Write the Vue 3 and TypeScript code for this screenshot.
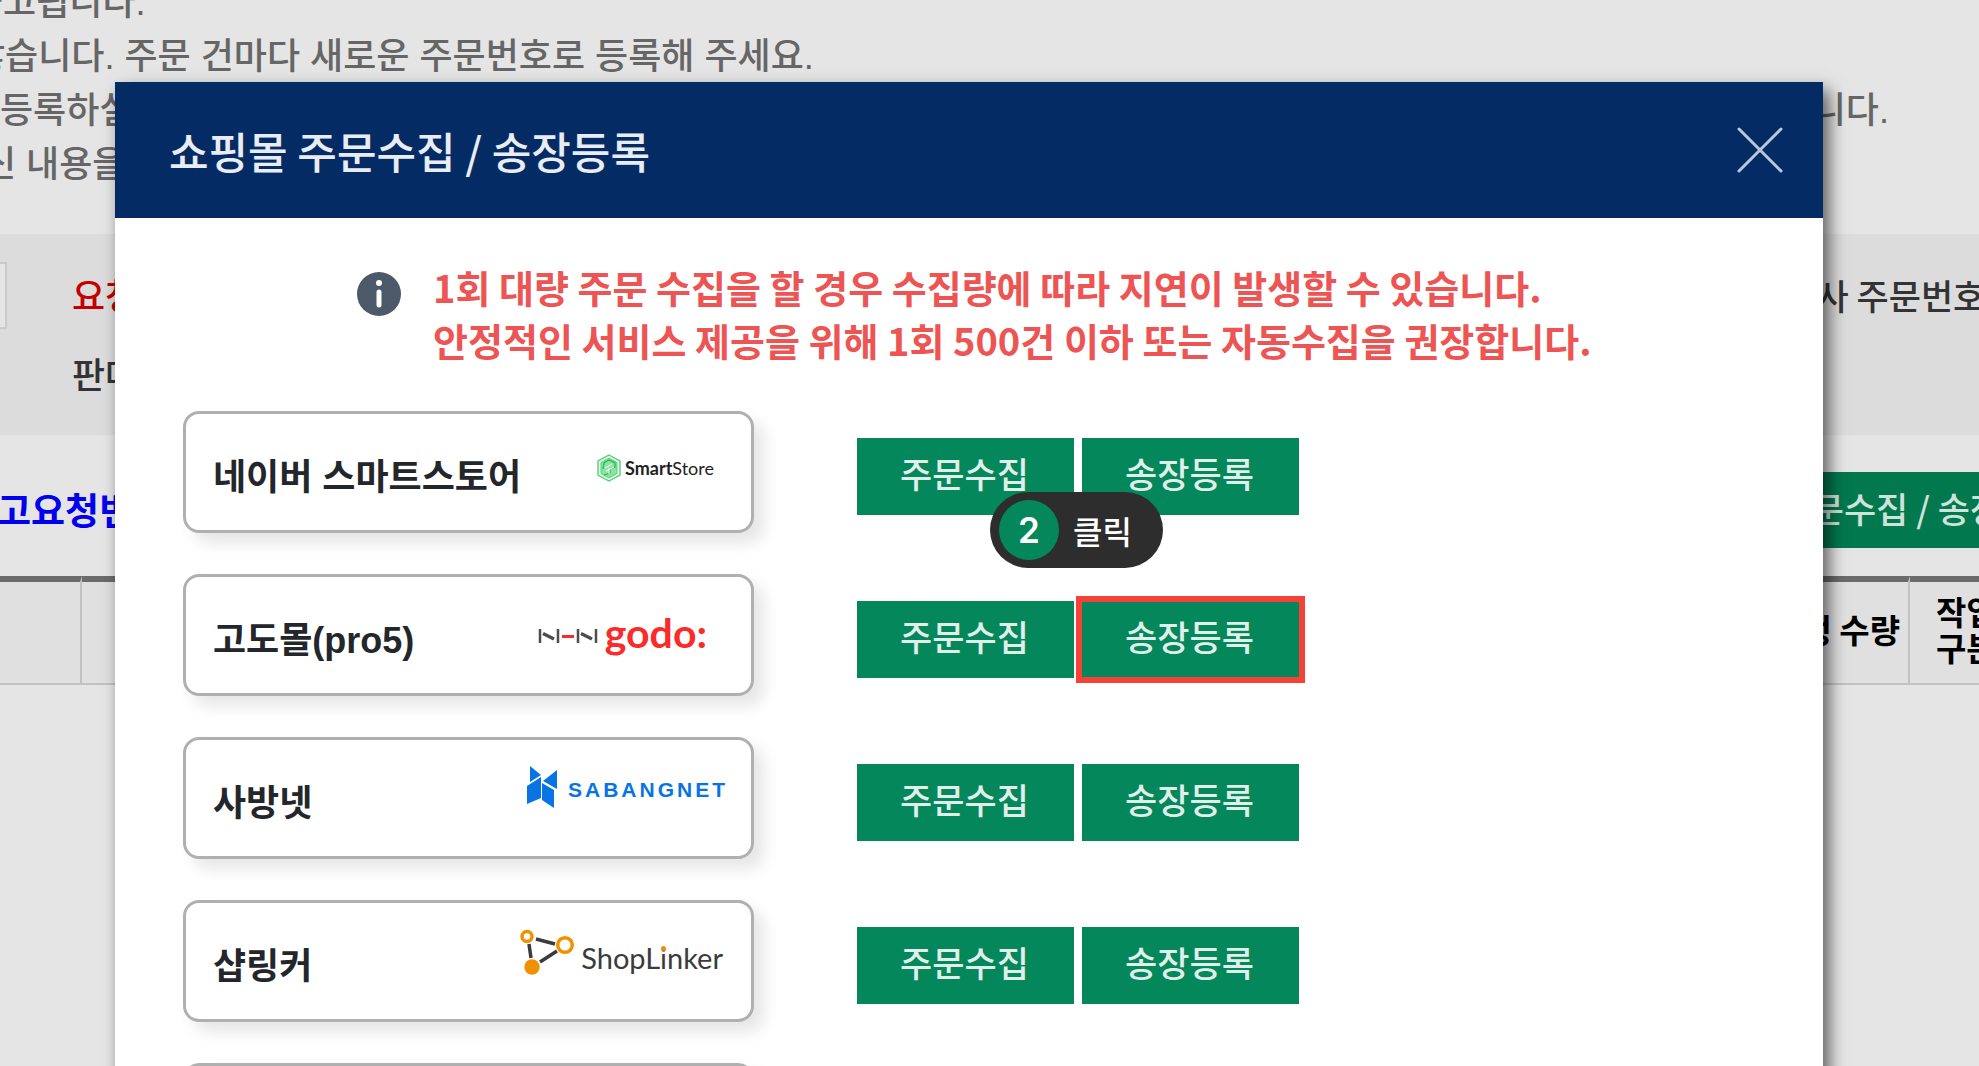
<script setup lang="ts">
interface NoticeLine {
  text: string
  tail?: string
  indent: number
}

interface Mall {
  id: string
  name: string
  highlighted?: boolean
}

const notices: NoticeLine[] = [
  { text: '출고됩니다.', indent: -30 },
  { text: '않습니다. 주문 건마다 새로운 주문번호로 등록해 주세요.', indent: -28 },
  { text: '등록하실', tail: '니다.', indent: 0 },
  { text: '신 내용을', indent: -17 },
]

const malls: Mall[] = [
  { id: 'smartstore', name: '네이버 스마트스토어' },
  { id: 'godo', name: '고도몰(pro5)', highlighted: true },
  { id: 'sabangnet', name: '사방넷' },
  { id: 'shoplinker', name: '샵링커' },
  { id: 'next', name: '' },
]
</script>

<template>
  <div class="page">
    <main class="backdrop">
      <section class="notices">
        <p v-for="line in notices" :key="line.text" :style="{ marginLeft: line.indent + 'px' }">
          <span>{{ line.text }}</span>
          <span v-if="line.tail">{{ line.tail }}</span>
        </p>
      </section>

      <section class="filters">
        <input class="filter-input" type="text" aria-label="검색어" />
        <div class="filter-labels">
          <span class="required">요청일</span>
          <span>판매처</span>
        </div>
        <div class="filter-labels right">
          <span>판매사 주문번호</span>
        </div>
      </section>

      <section class="toolbar">
        <strong>출고요청번호</strong>
        <button type="button" class="toolbar-button">쇼핑몰 주문수집 / 송장등록</button>
      </section>

      <table class="orders">
        <thead>
          <tr>
            <th class="col-check"></th>
            <th></th>
            <th class="col-qty">예정 수량</th>
            <th class="col-kind">작업<br />구분</th>
          </tr>
        </thead>
      </table>
    </main>

    <div class="modal" role="dialog" aria-labelledby="modal-title">
      <header class="modal-header">
        <h1 id="modal-title">쇼핑몰 주문수집 / 송장등록</h1>
        <button type="button" class="close" aria-label="닫기">
          <svg viewBox="0 0 46 46" width="46" height="46">
            <path d="M2 2 44 44M44 2 2 44" stroke="#bcc8da" stroke-width="3" stroke-linecap="round" />
          </svg>
        </button>
      </header>

      <div class="alert">
        <svg viewBox="0 0 44 44" width="44" height="44" aria-hidden="true">
          <circle cx="22" cy="22" r="22" fill="#4b5968" />
          <circle cx="22" cy="11" r="3" fill="#fff" />
          <path d="M22 20V33" stroke="#fff" stroke-width="5" stroke-linecap="round" />
        </svg>
        <p>
          1회 대량 주문 수집을 할 경우 수집량에 따라 지연이 발생할 수 있습니다.<br />
          안정적인 서비스 제공을 위해 1회 500건 이하 또는 자동수집을 권장합니다.
        </p>
      </div>

      <ul class="malls">
        <li v-for="mall in malls" :key="mall.id">
          <div class="card">
            <span class="mall-name">{{ mall.name }}</span>

            <span v-if="mall.id === 'smartstore'" class="logo smartstore">
              <svg viewBox="0 0 24 28" width="24" height="28" aria-hidden="true">
                <path d="M12 1 23 7V21L12 27 1 21V7Z" fill="#effcf2" stroke="#4fd273" stroke-width="1.4" />
                <path d="M12 4 20 8.500V19.500L12 24 4 19.500V8.500Z" fill="#8be5a2" stroke="#4fd273" />
                <path d="M6 15 7 9 12 6 18 9V13L13 15V19L7 21" fill="none" stroke="#2fb556" stroke-width="1.300" />
                <path d="M8 14 15 10M9 17 17 13M12 14V20" fill="none" stroke="#fff" />
              </svg>
              <span><b>Smart</b>Store</span>
            </span>

            <span v-else-if="mall.id === 'godo'" class="logo godo">
              <svg viewBox="0 0 60 16" width="60" height="16" aria-hidden="true">
                <g fill="none" stroke="#4d4d4d" stroke-width="2.500">
                  <path d="M2 1V15M20 1V15M40 1V15M58 1V15" />
                  <path d="M5 5.500 16 11M43 5.500 54 11" stroke-width="3.500" />
                </g>
                <path d="M24 8.500H36" stroke="#fa2b2b" stroke-width="3" />
              </svg>
              <span>godo:</span>
            </span>

            <span v-else-if="mall.id === 'sabangnet'" class="logo sabangnet">
              <svg viewBox="0 0 31 42" width="31" height="42" aria-hidden="true">
                <g fill="#0874e4">
                  <path d="M3 0 14 9 3 16Z" />
                  <path d="M30 4V23L16 15Z" />
                  <path d="M0 20 14 11V32L0 38Z" />
                  <path d="M15 17 27 24V42L15 34Z" />
                </g>
              </svg>
              <span>SABANGNET</span>
            </span>

            <span v-else-if="mall.id === 'shoplinker'" class="logo shoplinker">
              <svg viewBox="0 0 56 46" width="56" height="46" aria-hidden="true">
                <path d="M16 10 35 15M9 15 11 29M20 33 37 22" stroke="#3b3b3d" stroke-width="3.500" fill="none" />
                <circle cx="7" cy="7.500" r="5" fill="#fff" stroke="#f29100" stroke-width="3.500" />
                <circle cx="45" cy="16" r="7.300" fill="#fff" stroke="#f29100" stroke-width="3.500" />
                <circle cx="12" cy="38" r="7.700" fill="#f29100" />
              </svg>
              <span>ShopL<span class="dotted">i</span>nker</span>
            </span>
          </div>

          <div class="actions">
            <button type="button">주문수집</button>
            <button type="button" :class="{ highlighted: mall.highlighted }">송장등록</button>
            <div v-if="mall.highlighted" class="step">
              <span class="step-number">2</span>
              <span>클릭</span>
            </div>
          </div>
        </li>
      </ul>
    </div>
  </div>
</template>

<style>
body {
  margin: 0;
}
</style>

<style scoped>
* {
  box-sizing: border-box;
}

.page {
  position: relative;
  height: 100vh;
  overflow: hidden;
  background: #e5e5e5;
  font-family: "Noto Sans CJK KR", sans-serif;
  font-size: 36px;
  font-weight: 500;
  white-space: nowrap;
}

p,
h1,
ul {
  margin: 0;
  padding: 0;
}

button {
  border: 0;
  padding: 0;
  font: inherit;
}

/* Screen behind the dialog */
.notices {
  height: 234px;
  overflow: hidden;
  color: #666;
  font-family: "Liberation Sans", "Noto Sans CJK KR", sans-serif;
  line-height: 54px;
}

.notices p {
  display: flex;
  justify-content: space-between;
  padding-right: 90px;
}

.notices p:first-child {
  margin-top: -24px;
}

.filters {
  display: grid;
  grid-template-columns: 72px 1fr 227px;
  height: 201px;
  padding-top: 28px;
  background: #dcdcdc;
  color: #333;
}

.filter-input {
  width: 7px;
  height: 67px;
  border: 2px solid #cbcbcb;
  border-left: 0;
  padding: 0;
  background: #e5e5e5;
}

.filter-labels {
  display: flex;
  flex-direction: column;
  gap: 26px;
  padding-top: 6px;
  line-height: 53px;
}

.filter-labels.right {
  font-size: 35px;
}

.required {
  color: #c40000;
}

.toolbar {
  display: flex;
  justify-content: space-between;
  align-items: center;
  height: 141px;
  padding-top: 8px;
}

.toolbar strong {
  margin-left: -37px;
  padding-bottom: 2px;
  color: #00e;
  font-size: 37px;
  font-weight: 700;
}

.toolbar-button {
  width: 324px;
  height: 76px;
  padding: 0 20px 5px;
  background: #02784f;
  color: #cfe3da;
  font-size: 35px;
  text-align: left;
}

.orders {
  width: 100%;
  table-layout: fixed;
  border-spacing: 0;
  color: #000;
  font-size: 33px;
  font-weight: 700;
  line-height: 36px;
}

.orders th {
  height: 109px;
  border-top: 6px solid #6b6b6b;
  border-right: 2px solid #c2c2c2;
  border-bottom: 2px solid #c2c2c2;
  padding: 0 8px 8px;
  background: #e0e0e0;
  text-align: right;
}

.orders .col-check {
  width: 82px;
}

.orders .col-qty {
  width: 160px;
}

.orders .col-kind {
  width: 69px;
  border-right: 0;
  padding-left: 26px;
  text-align: left;
}

/* Dialog */
.modal {
  position: absolute;
  top: 82px;
  right: 156px;
  left: 115px;
  background: #fff;
  box-shadow: 6px 8px 16px rgba(0, 0, 0, 0.6);
}

.modal-header {
  display: flex;
  justify-content: space-between;
  align-items: center;
  height: 136px;
  padding: 0 40px 0 54px;
  background: #052b65;
}

.modal-header h1 {
  color: #e9edf3;
  font-size: 43px;
  font-weight: 500;
}

.close {
  display: flex;
  background: none;
}

.alert {
  display: flex;
  gap: 32px;
  padding: 42px 0 0 242px;
  color: #ec5553;
  font-size: 38px;
  font-weight: 700;
  line-height: 53px;
}

.alert svg {
  margin-top: 12px;
}

.malls {
  display: flex;
  flex-direction: column;
  gap: 41px;
  padding: 45px 68px 0;
  list-style: none;
}

.malls li {
  display: flex;
  gap: 103px;
}

.card {
  display: flex;
  justify-content: space-between;
  width: 571px;
  height: 122px;
  border: 3px solid #b0b0b0;
  border-radius: 16px;
  padding: 0 26px 0 27px;
  background: #fff;
  box-shadow: 10px 10px 16px rgba(0, 0, 0, 0.1);
}

.mall-name {
  color: #23272b;
  font-family: "Liberation Sans", "Noto Sans CJK KR", sans-serif;
  font-weight: 700;
  line-height: 128px;
}

.logo {
  display: flex;
  align-items: center;
}

.smartstore {
  gap: 4px;
  height: 108px;
  padding-right: 11px;
  color: #222;
  font-family: Lato, sans-serif;
  font-size: 18px;
  font-weight: 400;
}

.smartstore b {
  font-weight: 700;
}

.godo {
  gap: 7px;
  height: 118px;
  padding-right: 18px;
  color: #fa2b2b;
  font-family: Lato, sans-serif;
  font-size: 41px;
  font-weight: 700;
}

.godo > span {
  padding-bottom: 8px;
}

.sabangnet {
  gap: 10px;
  height: 94px;
  padding-right: 0;
  color: #0874e4;
  font-family: "Liberation Sans", sans-serif;
  font-size: 21px;
  font-weight: 700;
  letter-spacing: 3px;
}

.sabangnet > span {
  margin-right: -3px;
  padding-top: 6px;
}

.shoplinker {
  gap: 5px;
  height: 98px;
  padding-right: 2px;
  color: #3b3b3d;
  font-family: Lato, sans-serif;
  font-size: 29px;
  font-weight: 400;
}

.shoplinker > span {
  padding-top: 10px;
}

.dotted {
  position: relative;
}

.dotted::after {
  content: "";
  position: absolute;
  top: 6px;
  left: 1px;
  width: 5px;
  height: 5px;
  border-radius: 50%;
  background: #f29100;
}

.actions {
  position: relative;
  display: flex;
  gap: 8px;
  padding-top: 27px;
}

.actions button {
  position: relative;
  width: 217px;
  height: 77px;
  padding: 0 2px 8px 0;
  background: #03875b;
  color: #e0efe9;
  font-size: 35px;
}

.highlighted::after {
  content: "";
  position: absolute;
  inset: -5px -6px;
  border: 6px solid #f44336;
}

.step {
  position: absolute;
  top: -82px;
  left: 133px;
  display: flex;
  align-items: center;
  gap: 14px;
  width: 173px;
  height: 76px;
  border-radius: 38px;
  padding-left: 9px;
  background: #2d2d2d;
  color: #fff;
  font-size: 32px;
  line-height: 60px;
}

.step-number {
  width: 60px;
  height: 60px;
  border-radius: 50%;
  background: #03875b;
  font-family: Inter, sans-serif;
  font-size: 35px;
  font-weight: 600;
  text-align: center;
}
</style>
